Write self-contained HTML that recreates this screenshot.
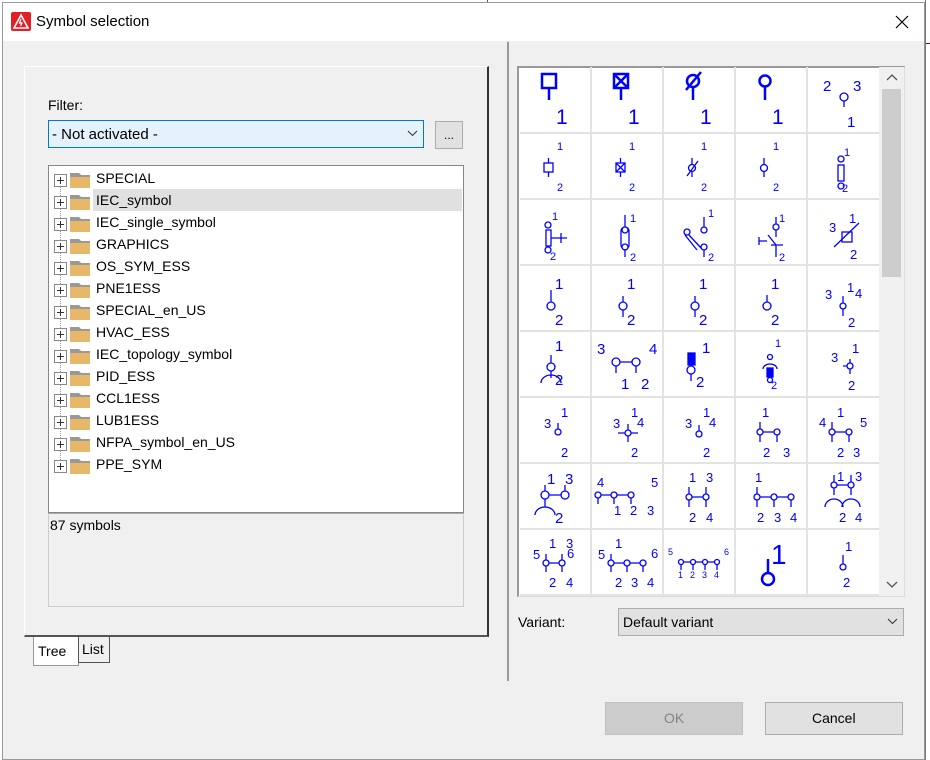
<!DOCTYPE html>
<html><head><meta charset="utf-8"><style>
*{margin:0;padding:0;box-sizing:border-box}
body{width:930px;height:760px;background:#fff;position:relative;overflow:hidden;font-family:"Liberation Sans",sans-serif;font-size:14px;color:#000}
.a{position:absolute}
.t{position:absolute;white-space:nowrap}
</style></head><body>
<div class="a" style="left:487px;top:0;width:1px;height:3px;background:#555"></div>
<div class="a" style="left:925px;top:0;width:1px;height:760px;background:#777"></div>
<div class="a" style="left:926px;top:43px;width:4px;height:1px;background:#a00"></div>
<div class="a" style="left:2px;top:2px;width:923px;height:758px;background:#f0f0f0;border:1px solid #999"></div>
<div class="a" style="left:3px;top:3px;width:921px;height:38px;background:#fff"></div>
<svg class="a" style="left:11px;top:12px" width="20" height="19" viewBox="0 0 20 19"><rect width="20" height="19" rx="2" fill="#e31e24"/><path d="M10 3 L17 16 H3 Z" fill="none" stroke="#fff" stroke-width="1.6"/><path d="M10 7 L8.5 11 H11 L9.5 14" fill="none" stroke="#fff" stroke-width="1.2"/></svg>
<div class="t" style="left:36px;top:13px;font-size:15px">Symbol selection</div>
<svg class="a" style="left:895px;top:15px" width="14" height="14"><path d="M1 1L13 13M13 1L1 13" stroke="#000" stroke-width="1.2"/></svg>

<div class="a" style="left:24px;top:66px;width:465px;height:571px;background:#f0f0f0;border-top:1px solid #fff;border-left:1px solid #fff;border-right:2px solid #333;border-bottom:2px solid #555"></div>
<div class="t" style="left:48px;top:97px">Filter:</div>
<div class="a" style="left:48px;top:120px;width:376px;height:28px;background:#e5f1fb;border:1px solid #0078d7"></div>
<div class="t" style="left:52px;top:126px;font-size:15px">- Not activated -</div>
<svg class="a" style="left:407px;top:130px" width="11" height="7"><path d="M1 1L5.5 5.5L10 1" fill="none" stroke="#333"/></svg>
<div class="a" style="left:435px;top:121px;width:28px;height:28px;background:#e1e1e1;border:1px solid #adadad"></div>
<div class="t" style="left:444px;top:128px;font-size:12px">...</div>
<div class="a" style="left:48px;top:165px;width:416px;height:348px;background:#fff;border:1px solid #828790"></div>
<div class="a" style="left:93px;top:189px;width:369px;height:22px;background:#e0e0e0"></div>
<div class="a" style="left:60px;top:186px;width:0;height:280px;border-left:1px dotted #999"></div>
<div class="a" style="left:48px;top:513px;width:416px;height:94px;background:#f0f0f0;border:1px solid #ccc;border-top:1px solid #aaa"></div>
<div class="t" style="left:50px;top:517px">87 symbols</div>
<div class="a" style="left:33px;top:637px;width:46px;height:29px;background:#fff;border:1px solid #999;border-top:none"></div>
<div class="t" style="left:38px;top:643px">Tree</div>
<div class="a" style="left:78px;top:637px;width:32px;height:26px;background:#f0f0f0;border:1px solid #555;border-top:none"></div>
<div class="t" style="left:82px;top:641px">List</div>

<div class="a" style="left:507px;top:42px;width:2px;height:639px;background:#999"></div>

<div class="a" style="left:517px;top:66px;width:388px;height:531px;border:2px solid #999;border-right:1px solid #ddd;border-bottom:1px solid #ddd;background:#fff"></div>
<div class="a" style="left:879px;top:67px;width:25px;height:529px;background:#f0f0f0"></div>
<div class="a" style="left:882px;top:89px;width:19px;height:188px;background:#cdcdcd"></div>
<svg class="a" style="left:886px;top:73px" width="12" height="8"><path d="M1 7L6 2L11 7" fill="none" stroke="#555" stroke-width="1.3"/></svg>
<svg class="a" style="left:886px;top:581px" width="12" height="8"><path d="M1 1L6 6L11 1" fill="none" stroke="#555" stroke-width="1.3"/></svg>
<svg class="a" style="left:519px;top:67px" width="360" height="529" font-family="Liberation Sans,sans-serif" fill="#0000ff">
<g stroke="#e3e3e3" stroke-width="2"><path d="M72 0V529M144 0V529M216 0V529M288 0V529M1 66H360M1 132H360M1 198H360M1 264H360M1 330H360M1 396H360M1 462H360M1 528H360"/></g>
<g stroke="#00f" fill="none" stroke-width="2.5">
<rect x="23" y="7" width="14" height="14"/><path d="M30 21V33"/>
<rect x="95" y="7" width="14" height="14"/><path d="M95 7L109 21M109 7L95 21M102 21V33"/>
<circle cx="174" cy="14" r="6"/><path d="M174 20V33M167 23L182 5"/>
<circle cx="246" cy="14" r="5.5"/><path d="M246 20V33"/>
</g>
<g font-size="21"><text x="37" y="57">1</text><text x="109" y="57">1</text><text x="181" y="57">1</text><text x="253" y="57">1</text></g>
<g font-size="15"><text x="304" y="24">2</text><text x="334" y="24">3</text><text x="328" y="60">1</text></g>
<g stroke="#00f" fill="#fff" stroke-width="1.3">
<circle cx="325" cy="30" r="4"/><path d="M325 34V40" fill="none"/>
<rect x="25" y="96" width="9" height="9" fill="none"/><path d="M29.5 91V96M29.5 105V110" fill="none"/>
<rect x="97" y="96" width="9" height="9" fill="none"/><path d="M97 96L106 105M106 96L97 105M101.5 91V96M101.5 105V110" fill="none"/>
<circle cx="173" cy="101" r="3.5"/><path d="M173 91V97M173 105V110M168 109L179 94" fill="none"/>
<circle cx="245" cy="101" r="3.5"/><path d="M245 91V97M245 105V110" fill="none"/>
<circle cx="322" cy="92" r="3"/><rect x="319" y="98" width="6" height="16" fill="none"/><circle cx="322" cy="119" r="3"/>
<circle cx="29" cy="158" r="3"/><rect x="27" y="163" width="5" height="16" fill="none"/><circle cx="29" cy="183" r="3"/><path d="M32 171H48M42 166V176" fill="none"/>
<rect x="102" y="160" width="8" height="22" rx="4" fill="none"/><circle cx="106" cy="163" r="3"/><circle cx="106" cy="180" r="3"/><path d="M106 148V160M106 182V190" fill="none"/>
<circle cx="185" cy="163" r="3"/><circle cx="185" cy="180" r="3"/><circle cx="168" cy="165" r="3"/><path d="M170 168L182 181M166 168L178 183M185 150V160M185 183V190" fill="none"/>
<circle cx="257" cy="160" r="3"/><path d="M257 150V157M257 163V170M257 178L249 168M252 178H264M257 178V190M240 174H248M240 170V178" fill="none"/>
<rect x="323" y="165" width="10" height="10" fill="none"/><path d="M315 180L340 156" fill="none"/>
<circle cx="32" cy="239" r="4"/><path d="M32 223V235" fill="none"/>
<circle cx="104" cy="239" r="4"/><path d="M104 229V235M104 243V250" fill="none"/>
<circle cx="176" cy="239" r="4"/><path d="M176 229V235M176 243V250" fill="none"/>
<circle cx="248" cy="239" r="4"/><path d="M248 228V235" fill="none"/>
<circle cx="324" cy="239" r="3"/><path d="M324 229V236M324 242V249" fill="none"/>
<circle cx="32" cy="300" r="4"/><path d="M32 288V296M32 304V311M22 316A10 8 0 0 1 42 316" fill="none"/>
<circle cx="97" cy="295" r="4"/><circle cx="117" cy="295" r="4"/><path d="M101 295H113M97 299V306M117 299V306" fill="none"/>
<rect x="169" y="286" width="7" height="12" fill="#00f"/><circle cx="172" cy="303" r="4"/><path d="M172 307V314" fill="none"/>
<circle cx="251" cy="290" r="2.5"/><path d="M244 302A7 5 0 0 1 258 302" fill="none"/><rect x="248" y="301" width="6" height="9" fill="#00f"/><circle cx="251" cy="313" r="2.5"/>
<circle cx="331" cy="299" r="3"/><path d="M331 292V296M324 299H328M331 302V307" fill="none"/>
<circle cx="39" cy="365" r="3"/><path d="M39 356V362" fill="none"/>
<circle cx="109" cy="366" r="3"/><path d="M109 357V363M99 366H106M112 366H119M109 369V375" fill="none"/>
<circle cx="180" cy="367" r="3"/><path d="M180 358V364" fill="none"/>
<circle cx="241" cy="365" r="3"/><circle cx="258" cy="365" r="3"/><path d="M244 365H255M241 355V362M241 368V375M258 368V375" fill="none"/>
<circle cx="313" cy="365" r="3"/><circle cx="330" cy="365" r="3"/><path d="M316 365H327M313 355V362M313 368V375M330 368V375" fill="none"/>
<circle cx="26" cy="428" r="4"/><circle cx="46" cy="428" r="4"/><path d="M30 428H42M26 418V424M46 418V424M26 432V440M16 448A10 8 0 0 1 36 448" fill="none"/>
<circle cx="79" cy="428" r="3"/><circle cx="95" cy="428" r="3"/><circle cx="112" cy="428" r="3"/><path d="M82 428H92M98 428H109M79 431V437M95 431V437M112 431V437" fill="none"/>
<circle cx="170" cy="430" r="3"/><circle cx="187" cy="430" r="3"/><path d="M173 430H184M170 420V427M170 433V440M187 420V427M187 433V440" fill="none"/>
<circle cx="238" cy="430" r="3"/><circle cx="255" cy="430" r="3"/><circle cx="272" cy="430" r="3"/><path d="M241 430H252M258 430H269M238 420V427M238 433V440M255 433V440M272 433V440" fill="none"/>
<circle cx="315" cy="418" r="3"/><circle cx="332" cy="418" r="3"/><path d="M318 418H329M315 408V415M332 408V415M315 421V428M332 421V428M306 440A9 8 0 0 1 324 440M323 440A9 8 0 0 1 341 440" fill="none"/>
<circle cx="27" cy="496" r="3"/><circle cx="43" cy="496" r="3"/><path d="M30 496H40M27 487V493M27 499V505M43 487V493M43 499V505" fill="none"/>
<circle cx="92" cy="496" r="3"/><circle cx="108" cy="496" r="3"/><circle cx="124" cy="496" r="3"/><path d="M95 496H105M111 496H121M92 487V493M92 499V505M108 499V505M124 499V505" fill="none"/>
<circle cx="162" cy="495" r="2.5"/><circle cx="174" cy="495" r="2.5"/><circle cx="186" cy="495" r="2.5"/><circle cx="198" cy="495" r="2.5"/><path d="M164.5 495H171.5M176.5 495H183.5M188.5 495H195.5M162 498V503M174 498V503M186 498V503M198 498V503" fill="none"/>
<circle cx="324" cy="500" r="3"/><path d="M324 488V497" fill="none"/>
</g>
<circle cx="249" cy="512" r="6" fill="none" stroke="#00f" stroke-width="2.5"/><path d="M249 492V506" stroke="#00f" stroke-width="2.5"/>
<g font-size="11"><text x="38" y="83">1</text><text x="38" y="124">2</text><text x="110" y="83">1</text><text x="110" y="124">2</text><text x="182" y="83">1</text><text x="182" y="124">2</text><text x="254" y="83">1</text><text x="254" y="124">2</text><text x="325" y="89">1</text><text x="323" y="125">2</text>
<text x="33" y="153">1</text><text x="31" y="193">2</text><text x="111" y="155">1</text><text x="111" y="194">2</text><text x="189" y="150">1</text><text x="189" y="194">2</text><text x="260" y="155">1</text><text x="260" y="194">2</text>
<text x="256" y="280">1</text><text x="252" y="322">2</text></g>
<g font-size="13"><text x="330" y="156">1</text><text x="310" y="165">3</text><text x="331" y="192">2</text><text x="306" y="232">3</text><text x="328" y="225">1</text><text x="336" y="231">4</text><text x="329" y="260">2</text>
<text x="333" y="286">1</text><text x="312" y="295">3</text><text x="329" y="323">2</text>
<text x="42" y="350">1</text><text x="25" y="361">3</text><text x="42" y="390">2</text>
<text x="112" y="350">1</text><text x="94" y="361">3</text><text x="118" y="360">4</text><text x="112" y="390">2</text>
<text x="184" y="350">1</text><text x="166" y="361">3</text><text x="190" y="360">4</text><text x="184" y="390">2</text>
<text x="243" y="350">1</text><text x="244" y="390">2</text><text x="264" y="390">3</text>
<text x="318" y="350">1</text><text x="300" y="360">4</text><text x="341" y="360">5</text><text x="318" y="390">2</text><text x="334" y="390">3</text>
<text x="78" y="420">4</text><text x="132" y="420">5</text><text x="95" y="448">1</text><text x="111" y="448">2</text><text x="128" y="448">3</text>
<text x="170" y="415">1</text><text x="187" y="415">3</text><text x="170" y="455">2</text><text x="187" y="455">4</text>
<text x="236" y="415">1</text><text x="238" y="455">2</text><text x="255" y="455">3</text><text x="271" y="455">4</text>
<text x="318" y="414">1</text><text x="336" y="414">3</text><text x="320" y="455">2</text><text x="336" y="455">4</text>
<text x="30" y="481">1</text><text x="47" y="481">3</text><text x="14" y="492">5</text><text x="48" y="491">6</text><text x="30" y="520">2</text><text x="47" y="520">4</text>
<text x="96" y="481">1</text><text x="79" y="492">5</text><text x="132" y="491">6</text><text x="96" y="520">2</text><text x="112" y="520">3</text><text x="128" y="520">4</text>
<text x="326" y="484">1</text><text x="324" y="520">2</text></g>
<g font-size="15"><text x="36" y="222">1</text><text x="36" y="258">2</text><text x="108" y="222">1</text><text x="108" y="258">2</text><text x="180" y="222">1</text><text x="180" y="258">2</text><text x="252" y="222">1</text><text x="252" y="258">2</text>
<text x="36" y="284">1</text><text x="36" y="318">2</text><text x="78" y="287">3</text><text x="130" y="287">4</text><text x="102" y="322">1</text><text x="122" y="322">2</text><text x="183" y="286">1</text><text x="177" y="320">2</text>
<text x="28" y="417">1</text><text x="46" y="417">3</text><text x="36" y="456">2</text></g>
<g font-size="9"><text x="149" y="488">5</text><text x="205" y="488">6</text><text x="159" y="511">1</text><text x="171" y="511">2</text><text x="183" y="511">3</text><text x="195" y="511">4</text></g>
<text x="252" y="497" font-size="28">1</text>
</svg>

<div class="t" style="left:518px;top:614px">Variant:</div>
<div class="a" style="left:618px;top:608px;width:286px;height:28px;background:#e1e1e1;border:1px solid #adadad"></div>
<div class="t" style="left:623px;top:614px">Default variant</div>
<svg class="a" style="left:887px;top:618px" width="11" height="7"><path d="M1 1L5.5 5.5L10 1" fill="none" stroke="#333"/></svg>

<div class="a" style="left:605px;top:702px;width:138px;height:33px;background:#cccccc;border:1px solid #bfbfbf"></div>
<div class="t" style="left:664px;top:710px;color:#838383">OK</div>
<div class="a" style="left:765px;top:702px;width:138px;height:33px;background:#e1e1e1;border:1px solid #adadad"></div>
<div class="t" style="left:812px;top:710px">Cancel</div>

<div class="t" style="left:96px;top:170px">SPECIAL</div>
<div class="t" style="left:96px;top:192px">IEC_symbol</div>
<div class="t" style="left:96px;top:214px">IEC_single_symbol</div>
<div class="t" style="left:96px;top:236px">GRAPHICS</div>
<div class="t" style="left:96px;top:258px">OS_SYM_ESS</div>
<div class="t" style="left:96px;top:280px">PNE1ESS</div>
<div class="t" style="left:96px;top:302px">SPECIAL_en_US</div>
<div class="t" style="left:96px;top:324px">HVAC_ESS</div>
<div class="t" style="left:96px;top:346px">IEC_topology_symbol</div>
<div class="t" style="left:96px;top:368px">PID_ESS</div>
<div class="t" style="left:96px;top:390px">CCL1ESS</div>
<div class="t" style="left:96px;top:412px">LUB1ESS</div>
<div class="t" style="left:96px;top:434px">NFPA_symbol_en_US</div>
<div class="t" style="left:96px;top:456px">PPE_SYM</div>
<svg class="a" style="left:53px;top:170px" width="40" height="310">
<g id="it">
<rect x="1.5" y="4.5" width="12" height="12" fill="#fff" stroke="#888"/><path d="M4 10.5H11M7.5 7V14" stroke="#333"/>
<path d="M17 3H26L28 5H37V18H17Z" fill="#e8b86a"/><path d="M17 3H26L28 5H37V7H17Z" fill="#999"/>
</g>
<use href="#it" y="22"/><use href="#it" y="44"/><use href="#it" y="66"/><use href="#it" y="88"/><use href="#it" y="110"/><use href="#it" y="132"/><use href="#it" y="154"/><use href="#it" y="176"/><use href="#it" y="198"/><use href="#it" y="220"/><use href="#it" y="242"/><use href="#it" y="264"/><use href="#it" y="286"/>
</svg>
</body></html>
